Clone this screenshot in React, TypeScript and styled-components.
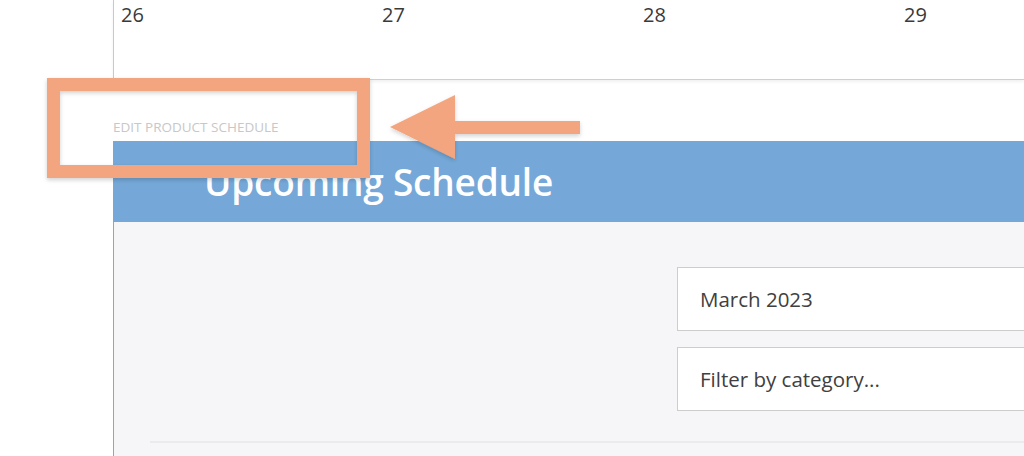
import React from "react";
import styled, { createGlobalStyle } from "styled-components";

const Global = createGlobalStyle`
  html, body { margin: 0; padding: 0; background: #ffffff; }
  body { font-family: "Open Sans", "Noto Sans", sans-serif; overflow: hidden; }
  * { box-sizing: border-box; }
`;

const Page = styled.div`
  position: relative;
  width: 1024px;
  height: 456px;
  overflow: hidden;
  padding-left: 113px;
  display: flex;
  flex-direction: column;
`;

const Calendar = styled.div`
  display: grid;
  grid-template-columns: repeat(4, 261px) 1fr;
  height: 80px;
  border-left: 1px solid #c9c9c9;
  border-bottom: 1px solid #cfcfcf;
  box-shadow: 0 2px 3px rgba(0, 0, 0, 0.06);
`;

const DayCell = styled.div`
  padding: 3px 0 0 7px;
  font-size: 20px;
  color: #3a3a3a;
  line-height: 24px;
`;

const Label = styled.div`
  margin-top: 39px;
  height: 22px;
  font-size: 13.5px;
  line-height: 16px;
  color: #c8c8c8;
  text-transform: uppercase;
`;

const Header = styled.div`
  height: 81px;
  background: #75a8d8;
  display: flex;
  align-items: center;
  padding-left: 91px;
`;

const Title = styled.h1`
  margin: 0;
  color: #ffffff;
  font-size: 37px;
  font-weight: 600;
  letter-spacing: -0.2px;
  line-height: 42px;
`;

const Body = styled.div`
  flex: 1;
  background: #f6f6f8;
  border-left: 1px solid #8ea6be;
  padding: 45px 0 0 0;
  display: flex;
  flex-direction: column;
  align-items: flex-end;
`;

const Controls = styled.div`
  width: 347px;
  display: flex;
  flex-direction: column;
  gap: 16px;
`;

const Field = styled.div`
  height: 64px;
  background: #ffffff;
  border: 1px solid #cdcdcd;
  border-right: none;
  display: flex;
  align-items: center;
  padding-left: 22px;
  font-size: 20.5px;
  color: #404040;
`;

const Divider = styled.div`
  align-self: stretch;
  margin: 30px 0 0 36px;
  height: 2px;
  background: #ebebee;
`;

const Annotation = styled.svg`
  position: absolute;
  left: 0;
  top: 0;
  pointer-events: none;
`;

export default function App() {
  return (
    <>
      <Global />
      <Page>
        <Calendar>
          <DayCell>26</DayCell>
          <DayCell>27</DayCell>
          <DayCell>28</DayCell>
          <DayCell>29</DayCell>
          <DayCell />
        </Calendar>
        <Label>Edit product schedule</Label>
        <Header>
          <Title>Upcoming Schedule</Title>
        </Header>
        <Body>
          <Controls>
            <Field>March 2023</Field>
            <Field>Filter by category...</Field>
          </Controls>
          <Divider />
        </Body>
        <Annotation width="1024" height="456" viewBox="0 0 1024 456">
          <defs>
            <filter id="sh" x="-20%" y="-20%" width="140%" height="140%">
              <feDropShadow dx="0" dy="2" stdDeviation="2" floodColor="#000" floodOpacity="0.18" />
            </filter>
          </defs>
          <g filter="url(#sh)" fill="#f2a57e">
            <rect x="53.5" y="84.5" width="310" height="87" fill="none" stroke="#f2a57e" strokeWidth="13" />
            <rect x="452" y="121" width="128" height="13" />
            <polygon points="390,127 455,95 455,159" />
          </g>
        </Annotation>
      </Page>
    </>
  );
}
